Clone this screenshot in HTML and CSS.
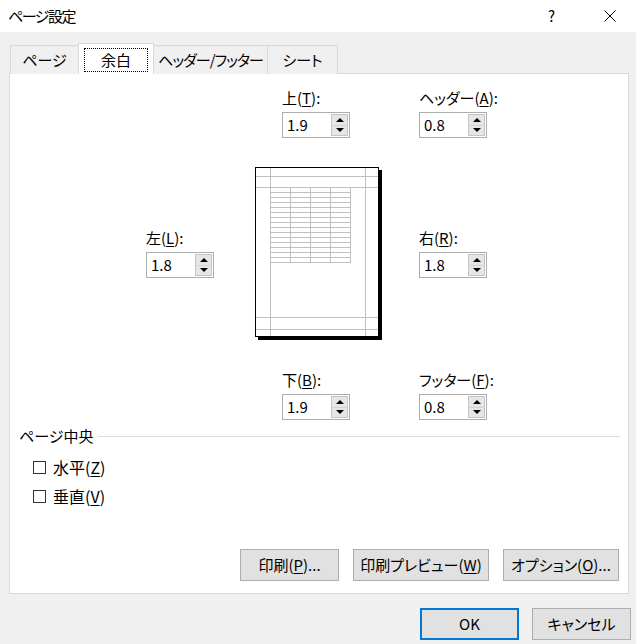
FILE: index.html
```html
<!DOCTYPE html>
<html lang="ja">
<head>
<meta charset="utf-8">
<title>ページ設定</title>
<link rel="stylesheet" href="styles.css">
</head>
<body>
<div class="dialog">
  <div class="titlebar">
    <span class="title">ページ設定</span>
    <span class="help">?</span>
    <span class="close"><svg width="12" height="12" viewBox="0 0 12 12"><path d="M0.5 0.5 L11.5 11.5 M11.5 0.5 L0.5 11.5" stroke="#000" stroke-width="1" fill="none"/></svg></span>
  </div>
  <div class="tabs">
    <div class="tab t1">ページ</div>
    <div class="tab t2 active"><span class="focus">余白</span></div>
    <div class="tab t3">ヘッダー/フッター</div>
    <div class="tab t4">シート</div>
  </div>
  <div class="panel">
    <div class="margins">
      <div class="field top">
        <div class="lbl">上(<u>T</u>):</div>
        <div class="spin"><span class="val">1.9</span><span class="arrows"><span class="up"></span><span class="down"></span></span></div>
      </div>
      <div class="field header">
        <div class="lbl">ヘッダー(<u>A</u>):</div>
        <div class="spin"><span class="val">0.8</span><span class="arrows"><span class="up"></span><span class="down"></span></span></div>
      </div>
      <div class="field left">
        <div class="lbl">左(<u>L</u>):</div>
        <div class="spin"><span class="val">1.8</span><span class="arrows"><span class="up"></span><span class="down"></span></span></div>
      </div>
      <div class="preview">
        <svg width="128" height="174" viewBox="0 0 128 174">
          <rect x="3" y="3" width="124" height="170" fill="#000"/>
          <rect x="0.5" y="0.5" width="123" height="169" fill="#fff" stroke="#000"/>
          <g stroke="#c0c0c0" stroke-width="1" fill="none">
            <path d="M15.5 1 V169 M110.5 1 V169 M1 9.5 H123 M1 20.5 H123 M1 150.5 H123 M1 162.5 H123"/>
            <path d="M35.5 20 V96 M55.5 20 V96 M75.5 20 V96 M95.5 20 V96"/>
            <path d="M15 25.5 H96 M15 30.5 H96 M15 35.5 H96 M15 40.5 H96 M15 45.5 H96 M15 50.5 H96 M15 55.5 H96 M15 60.5 H96 M15 65.5 H96 M15 70.5 H96 M15 75.5 H96 M15 80.5 H96 M15 85.5 H96 M15 90.5 H96 M15 95.5 H96"/>
          </g>
        </svg>
      </div>
      <div class="field right">
        <div class="lbl">右(<u>R</u>):</div>
        <div class="spin"><span class="val">1.8</span><span class="arrows"><span class="up"></span><span class="down"></span></span></div>
      </div>
      <div class="field bottom">
        <div class="lbl">下(<u>B</u>):</div>
        <div class="spin"><span class="val">1.9</span><span class="arrows"><span class="up"></span><span class="down"></span></span></div>
      </div>
      <div class="field footer">
        <div class="lbl">フッター(<u>F</u>):</div>
        <div class="spin"><span class="val">0.8</span><span class="arrows"><span class="up"></span><span class="down"></span></span></div>
      </div>
    </div>
    <div class="group">
      <div class="group-title"><span>ページ中央</span><span class="rule"></span></div>
      <div class="check"><span class="box"></span><span>水平(<u>Z</u>)</span></div>
      <div class="check"><span class="box"></span><span>垂直(<u>V</u>)</span></div>
    </div>
    <div class="panel-buttons">
      <button class="btn b-print">印刷(<u>P</u>)...</button>
      <button class="btn b-preview">印刷プレビュー(<u>W</u>)</button>
      <button class="btn b-option">オプション(<u>O</u>)...</button>
    </div>
  </div>
  <div class="footer-buttons">
    <button class="btn b-ok default">OK</button>
    <button class="btn b-cancel">キャンセル</button>
  </div>
</div>
</body>
</html>
```
FILE: styles.css
```css
* { box-sizing: border-box; }
html, body { margin: 0; padding: 0; }
body {
  width: 636px;
  height: 644px;
  background: #f0f0f0;
  font-family: "Noto Sans CJK JP", sans-serif;
  font-size: 15px;
  line-height: 20px;
  color: #000;
  font-feature-settings: "palt";
  overflow: hidden;
}
u { text-decoration-thickness: 1px; text-underline-offset: 2px; }
.dialog { width: 636px; height: 644px; }

.titlebar {
  height: 32px;
  background: #fff;
  display: flex;
  align-items: center;
  padding-left: 8px;
}
.title { font-size: 15px; letter-spacing: -1.5px; }
.help { margin-left: auto; margin-right: 49px; font-size: 15px; }
.close { width: 12px; height: 12px; margin-right: 20px; display: flex; }

.tabs {
  display: flex;
  align-items: flex-end;
  height: 41px;
  padding-left: 10px;
}
.tab {
  height: 29px;
  border: 1px solid #d9d9d9;
  border-bottom: none;
  background: #f0f0f0;
  display: flex;
  align-items: center;
  justify-content: center;
  margin-bottom: -1px;
  margin-left: -1px;
  white-space: nowrap;
}
.t1 { width: 69px; margin-left: 0; }
.t2 { width: 76px; }
.t3 { width: 115px; letter-spacing: -1px; }
.t4 { width: 71px; }
.tab.active {
  height: 31px;
  background: #fff;
  position: relative;
  z-index: 1;
  align-items: flex-start;
  padding-top: 4px;
}
.focus {
  display: block;
  width: 64px;
  height: 24px;
  border: 1px dotted #000;
  text-align: center;
  line-height: 21px;
}

.panel {
  margin-left: 9px;
  width: 620px;
  height: 521px;
  background: #fff;
  border: 1px solid #d9d9d9;
  display: flex;
  flex-direction: column;
}

.margins {
  display: grid;
  grid-template-columns: 109px 164px 120px;
  grid-template-rows: auto auto auto;
  row-gap: 29px;
  padding: 14px 0 0 136px;
}
.field { display: flex; flex-direction: column; }
.lbl { height: 20px; margin-bottom: 4px; white-space: nowrap; }
.top { grid-column: 2; grid-row: 1; margin-left: 27px; }
.header { grid-column: 3; grid-row: 1; }
.left { grid-column: 1; grid-row: 2; align-self: center; margin-top: -2px; }
.preview { grid-column: 2; grid-row: 2; height: 174px; }
.preview svg { display: block; }
.right { grid-column: 3; grid-row: 2; align-self: center; margin-top: -2px; }
.bottom { grid-column: 2; grid-row: 3; margin-left: 27px; }
.footer { grid-column: 3; grid-row: 3; }

.spin {
  width: 68px;
  height: 26px;
  border: 1px solid #adadad;
  display: flex;
  align-items: stretch;
  background: #fff;
}
.val { flex: 1; padding-left: 4px; line-height: 24px; font-size: 15px; }
.arrows {
  width: 18px;
  display: flex;
  flex-direction: column;
  padding: 1px 1px 1px 0;
}
.up, .down {
  flex: 1;
  border: 1px solid #c4c4c4;
  background: #e6e6e6;
  display: flex;
  align-items: center;
  justify-content: center;
}
.down { border-top-color: #d4d4d4; }
.up { border-bottom: none; }
.up::after, .down::after {
  content: "";
  width: 0;
  height: 0;
  border-left: 4px solid transparent;
  border-right: 4px solid transparent;
}
.up::after { border-bottom: 4px solid #000; }
.down::after { border-top: 4px solid #000; }

.group { padding: 6px 8px 0 9px; }
.group-title { display: flex; align-items: center; height: 20px; }
.rule { flex: 1; height: 1px; background: #dcdcdc; margin-left: 5px; }
.check {
  display: flex;
  align-items: center;
  height: 20px;
  margin-top: 9px;
  padding-left: 14px;
  font-size: 16px;
}
.group-title + .check { margin-top: 11px; }
.box {
  width: 13px;
  height: 13px;
  border: 1px solid #333;
  margin-right: 7px;
  background: #fff;
}

.btn {
  font-family: inherit;
  font-size: 15px;
  font-feature-settings: "palt";
  color: #000;
  height: 32px;
  background: #e1e1e1;
  border: 1px solid #adadad;
  padding: 0;
  margin: 0;
  line-height: 20px;
}
.panel-buttons {
  margin-top: auto;
  display: flex;
  justify-content: flex-end;
  gap: 14px;
  padding: 0 9px 12px 0;
}
.b-print { width: 99px; }
.b-preview { width: 136px; }
.b-option { width: 116px; }

.footer-buttons {
  display: flex;
  justify-content: flex-end;
  gap: 13px;
  padding: 14px 5px 0 0;
}
.b-ok, .b-cancel { width: 99px; }
.default { border: 2px solid #0078d7; }
```
